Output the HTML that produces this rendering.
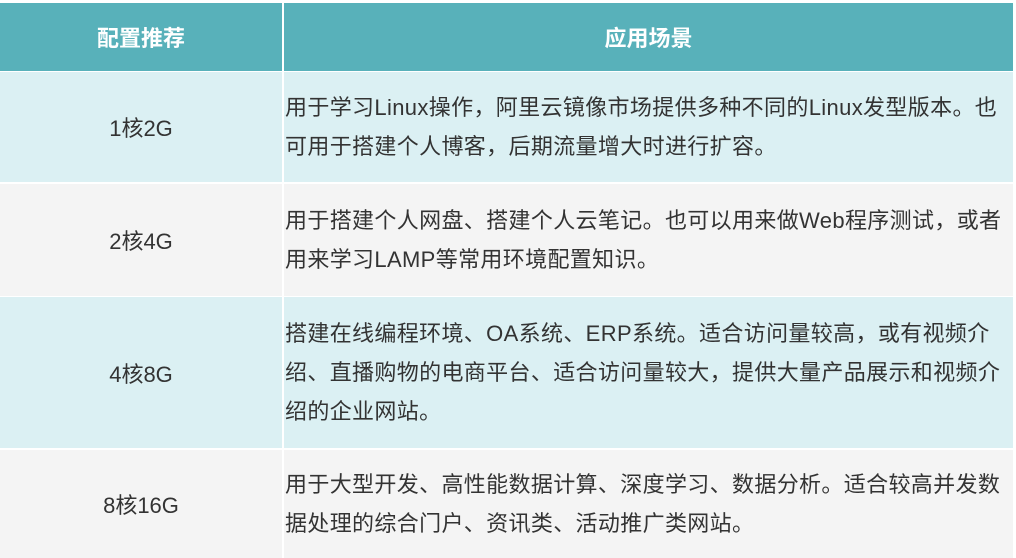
<!DOCTYPE html>
<html><head><meta charset="utf-8"><style>
body{margin:0;width:1016px;height:558px;background:#fff;overflow:hidden;font-family:"Liberation Sans","Microsoft YaHei","Noto Sans CJK SC",sans-serif;color:#333;}
.c{position:absolute;box-sizing:border-box;}
.h{background:#58b1ba;color:#fff;font-weight:bold;font-size:22px;display:flex;align-items:center;justify-content:center;}
.l{display:flex;align-items:center;justify-content:center;font-size:22px;}
.r{display:flex;align-items:center;padding-left:1px;font-size:22px;line-height:39px;white-space:nowrap;letter-spacing:0.35px;}
.a{background:#dbf0f3}.b{background:#f4f4f4}
</style></head><body>
<div class="c h" style="left:0;top:3px;width:282px;height:68px">配置推荐</div>
<div class="c h" style="left:284px;top:3px;width:729px;height:68px">应用场景</div>

<div class="c l a" style="left:0;top:72px;width:282px;height:110px">1核2G</div>
<div class="c r a" style="left:284px;top:72px;width:729px;height:110px"><div>用于学习Linux操作，阿里云镜像市场提供多种不同的Linux发型版本。也<br>可用于搭建个人博客，后期流量增大时进行扩容。</div></div>

<div class="c l b" style="left:0;top:184px;width:282px;height:112px">2核4G</div>
<div class="c r b" style="left:284px;top:184px;width:729px;height:112px"><div>用于搭建个人网盘、搭建个人云笔记。也可以用来做Web程序测试，或者<br>用来学习LAMP等常用环境配置知识。</div></div>

<div class="c l a" style="left:0;top:297px;width:282px;height:151px">4核8G</div>
<div class="c r a" style="left:284px;top:297px;width:729px;height:151px"><div>搭建在线编程环境、OA系统、ERP系统。适合访问量较高，或有视频介<br>绍、直播购物的电商平台、适合访问量较大，提供大量产品展示和视频介<br>绍的企业网站。</div></div>

<div class="c l b" style="left:0;top:450px;width:282px;height:108px">8核16G</div>
<div class="c r b" style="left:284px;top:450px;width:729px;height:108px"><div>用于大型开发、高性能数据计算、深度学习、数据分析。适合较高并发数<br>据处理的综合门户、资讯类、活动推广类网站。</div></div>
</body></html>
